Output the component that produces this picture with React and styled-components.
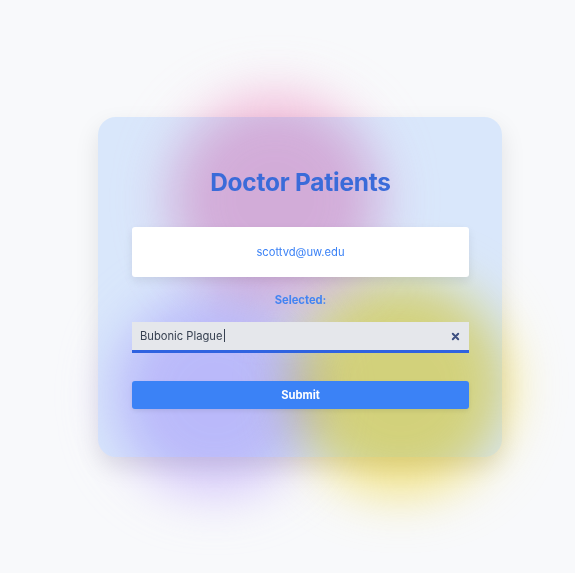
import React from "react";
import styled, { createGlobalStyle } from "styled-components";

const GlobalStyle = createGlobalStyle`
    html, body {
        margin: 0;
        padding: 0;
        background-color: #f8f9fb;
        font-family: Inter, "Liberation Sans", sans-serif;
    }
`

const Page = styled.div`
    width: 575px;
    height: 573px;
    padding: 117px 0 0 98px;
    box-sizing: border-box;
    overflow: hidden;
`

const Stage = styled.div`
    position: relative;
    width: 404px;
    height: 340px;
`

const Blob = styled.div`
    position: absolute;
    left: ${props => props.x}px;
    top: ${props => props.y}px;
    width: ${props => props.size}px;
    height: ${props => props.size}px;
    border-radius: 50%;
    background-color: ${props => props.color};
    filter: blur(26px);
    opacity: 0.72;
    mix-blend-mode: multiply;
`

// the card tint multiplies over the blobs, the content sits above it
const Card = styled.div`
    position: relative;
    box-sizing: border-box;
    width: 404px;
    height: 340px;
    border-radius: 18px;
    box-shadow: 0 10px 24px rgba(0, 0, 0, 0.1);
    padding: 47px 33px 0 34px;
    display: flex;
    flex-direction: column;

    &::before {
        content: "";
        position: absolute;
        inset: 0;
        border-radius: 18px;
        background-color: #dfedff;
        mix-blend-mode: multiply;
    }

    & > * {
        position: relative;
    }
`

const Title = styled.h1`
    margin: 0 0 27px;
    text-align: center;
    font-size: 24.4px;
    line-height: 36px;
    font-weight: 700;
    color: #3a6bd9;
    letter-spacing: -0.2px;
`

const EmailBox = styled.div`
    height: 50px;
    background-color: #ffffff;
    border-radius: 3px;
    box-shadow: 0 4px 10px rgba(0, 0, 0, 0.08);
    display: flex;
    align-items: center;
    justify-content: center;
    font-size: 11.2px;
    color: #3b82f6;
`

const Label = styled.div`
    margin: 16px 0 15px;
    text-align: center;
    font-size: 11.2px;
    line-height: 14px;
    font-weight: 700;
    color: #4384f2;
`

const InputRow = styled.div`
    height: 28px;
    background-color: #e5e7eb;
    border-bottom: 3px solid #2f63e0;
    display: flex;
    align-items: center;
    padding: 0 9px 0 8px;
    font-size: 11.2px;
    color: #374151;
`

const Value = styled.span`
    flex: 1;
`

const Caret = styled.span`
    display: inline-block;
    width: 1px;
    height: 13px;
    margin-left: 1px;
    vertical-align: -2px;
    background-color: #374151;
`

const Clear = styled.svg`
    width: 9px;
    height: 9px;
`

const SubmitButton = styled.button`
    margin-top: 28px;
    height: 28px;
    border: none;
    border-radius: 3px;
    background-color: #3b82f6;
    color: #ffffff;
    font-family: inherit;
    font-size: 11.2px;
    font-weight: 700;
    box-shadow: 0 2px 4px rgba(0, 0, 0, 0.08);
    cursor: pointer;
`

const App = () => {
    return (
        <>
            <GlobalStyle />
            <Page>
                <Stage>
                    <Blob x={72} y={-22} size={210} color="#f6a5cf" />
                    <Blob x={17} y={178} size={200} color="#cdb9fe" />
                    <Blob x={195} y={161} size={215} color="#f6de4a" />
                    <Card>
                        <Title>Doctor Patients</Title>
                        <EmailBox>scottvd@uw.edu</EmailBox>
                        <Label>Selected:</Label>
                        <InputRow>
                            <Value>Bubonic Plague<Caret /></Value>
                            <Clear viewBox="0 0 10 10">
                                <path d="M2 2 L8 8 M8 2 L2 8" stroke="#3d4f80" strokeWidth="2.2" strokeLinecap="round" />
                            </Clear>
                        </InputRow>
                        <SubmitButton>Submit</SubmitButton>
                    </Card>
                </Stage>
            </Page>
        </>
    )
}

export default App;
